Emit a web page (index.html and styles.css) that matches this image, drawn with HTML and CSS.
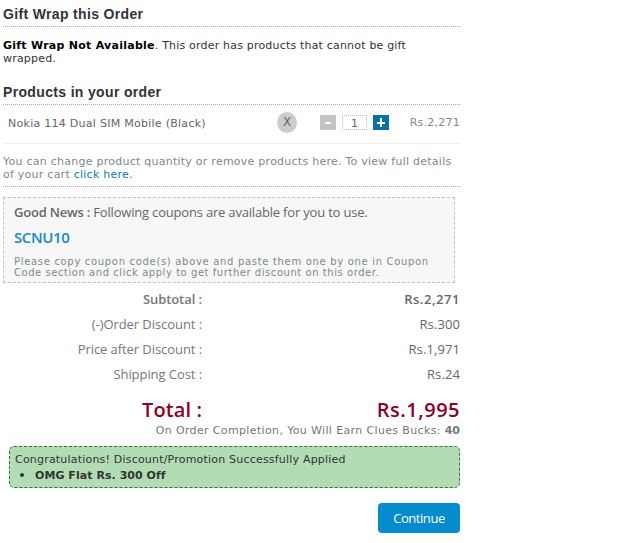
FILE: index.html
```
<!DOCTYPE html>
<html lang="en">
<head>
    <meta charset="UTF-8">
    <title>Order Summary</title>
    <link rel="stylesheet" href="styles.css">
</head>
<body>
    <div class="summary">
        <h2>Gift Wrap this Order</h2>
        <p class="gift-text"><b>Gift Wrap Not Available</b>. This order has products that cannot be gift<br>wrapped.</p>

        <h2>Products in your order</h2>
        <div class="product">
            <span class="product-name">Nokia 114 Dual SIM Mobile (Black)</span>
            <a class="remove">X</a>
            <a class="qty-btn minus"><svg width="16" height="15" viewBox="0 0 16 15"><path d="M5 7h6v2H5z" fill="#fff"/></svg></a>
            <span class="qty">1</span>
            <a class="qty-btn plus"><svg width="16" height="15" viewBox="0 0 16 15"><path d="M7 3h2v4h3v2H9v3H7V9H4V7h3z" fill="#fff"/></svg></a>
            <span class="price">Rs.2,271</span>
        </div>

        <p class="note">You can change product quantity or remove products here. To view full details<br>of your cart <a>click here.</a></p>

        <div class="coupon">
            <div class="coupon-title"><b>Good News :</b> Following coupons are available for you to use.</div>
            <div class="coupon-code">SCNU10</div>
            <p class="coupon-help">Please copy coupon code(s) above and paste them one by one in Coupon<br><span class="help-end">Code section and click apply to get further discount on this order.</span></p>
        </div>

        <div class="totals">
            <div class="row bold"><span class="label">Subtotal :</span><span class="amount">Rs.2,271</span></div>
            <div class="row"><span class="label">(-)Order Discount :</span><span class="amount">Rs.300</span></div>
            <div class="row"><span class="label">Price after Discount :</span><span class="amount">Rs.1,971</span></div>
            <div class="row"><span class="label">Shipping Cost :</span><span class="amount">Rs.24</span></div>
            <div class="row total"><span class="label">Total :</span><span class="amount">Rs.1,995</span></div>
        </div>
        <div class="bucks">On Order Completion, You Will Earn Clues Bucks: <b>40</b></div>

        <div class="success">
            <div class="success-title">Congratulations! Discount/Promotion Successfully Applied</div>
            <ul>
                <li>OMG Flat Rs. 300 Off</li>
            </ul>
        </div>

        <div class="actions">
            <button type="button">Continue</button>
        </div>
    </div>
</body>
</html>
```
FILE: styles.css
```
body {
    margin: 0;
    background: #fff;
    font-family: Verdana, "DejaVu Sans", sans-serif;
    font-size: 11px;
    line-height: 13px;
    color: #333;
}

.summary {
    width: 457px;
    margin-left: 3px;
    padding-top: 4px;
    white-space: nowrap;
}

h2 {
    margin: 0;
    height: 22px;
    border-bottom: 1px dotted #aaa;
    font-family: Arial, "Liberation Sans", sans-serif;
    font-size: 14px;
    line-height: 20px;
    font-weight: bold;
    letter-spacing: 0.34px;
    color: #333;
}

.gift-text {
    height: 27px;
    margin: 12px 0 16px;
    letter-spacing: 0.19px;
}

.gift-text b {
    letter-spacing: 0.26px;
    color: #000;
}

.product {
    display: flex;
    align-items: center;
    box-sizing: border-box;
    height: 39px;
    padding: 0 0 3px 5px;
    border-bottom: 1px solid #eee;
    color: #666;
}

.product-name {
    width: 269px;
    padding-top: 2px;
    letter-spacing: 0.27px;
}

.remove {
    width: 20px;
    height: 21px;
    border-radius: 50%;
    background: #ccc;
    font-size: 12px;
    line-height: 21px;
    text-align: center;
}

.qty-btn {
    width: 16px;
    height: 15px;
}

.qty-btn svg {
    display: block;
}

.minus {
    margin-left: 23px;
    background: #c4c4c4;
}

.plus {
    background: #0772a9;
}

.qty {
    width: 23px;
    height: 13px;
    margin: 0 6px;
    border: 1px dotted #bbb;
    text-align: center;
    line-height: 15px;
}

.price {
    margin-left: auto;
    letter-spacing: 0.25px;
    color: #7d8a8a;
}

.note {
    margin: 11px 0 10px;
    padding-bottom: 5px;
    border-bottom: 1px dotted #aaa;
    letter-spacing: 0.25px;
    color: #7d8a8a;
}

.note a {
    color: #0b7bc1;
}

.coupon {
    box-sizing: border-box;
    width: 452px;
    height: 86px;
    padding: 5px 10px 0;
    border: 1px dashed #c4c4c4;
    background: #f7f7f7;
    font-family: "Trebuchet MS", "Open Sans", sans-serif;
}

.coupon-title {
    font-size: 13px;
    line-height: 18px;
    letter-spacing: -0.19px;
    color: #666;
}

.coupon-title b {
    font-weight: 600;
    letter-spacing: -0.2px;
}

.coupon-code {
    margin-top: 5px;
    font-size: 15px;
    line-height: 22px;
    font-weight: 600;
    letter-spacing: -0.4px;
    color: #1489cc;
}

.coupon-help {
    margin: 8px 0 0;
    font-family: Verdana, "DejaVu Sans", sans-serif;
    font-size: 10px;
    line-height: 11px;
    letter-spacing: 0.68px;
    color: #7d8a8a;
}

.help-end {
    letter-spacing: 0.55px;
}

.totals {
    padding-top: 4px;
    font-family: "Trebuchet MS", "Open Sans", sans-serif;
    font-size: 13px;
    color: #666;
}

.row {
    display: flex;
    justify-content: space-between;
    height: 25px;
    line-height: 25px;
}

.label {
    width: 199px;
    text-align: right;
    letter-spacing: -0.07px;
    color: #777;
}

.amount {
    letter-spacing: 0.1px;
}

.bold {
    font-weight: 600;
}

.bold .amount {
    letter-spacing: 0.55px;
}

.total {
    box-sizing: border-box;
    height: 37px;
    padding-top: 9px;
    font-size: 20px;
    line-height: 28px;
    font-weight: 600;
}

.total .label,
.total .amount {
    letter-spacing: 0.1px;
    color: #8c0028;
}

.total .amount {
    letter-spacing: 0.5px;
}

.bucks {
    text-align: right;
    letter-spacing: 0.36px;
    color: #777;
}

.bucks b {
    letter-spacing: 0;
}

.success {
    box-sizing: border-box;
    height: 42px;
    margin: 9px 0 15px 6px;
    padding: 6px 5px 0;
    border: 1px dashed #267a35;
    border-radius: 5px;
    background: #b2dcb4;
}

.success-title {
    letter-spacing: 0.2px;
}

.success ul {
    margin: 2px 0 0;
    padding-left: 20px;
    font-weight: bold;
    letter-spacing: 0.05px;
}

.success li::marker {
    font-size: 14px;
}

.actions {
    display: flex;
    justify-content: flex-end;
}

button {
    width: 82px;
    height: 30px;
    padding: 0;
    border: none;
    border-radius: 4px;
    background: #048ccf;
    color: #fff;
    font-family: "Trebuchet MS", "Open Sans", sans-serif;
    font-size: 13px;
    letter-spacing: -0.45px;
}
```
